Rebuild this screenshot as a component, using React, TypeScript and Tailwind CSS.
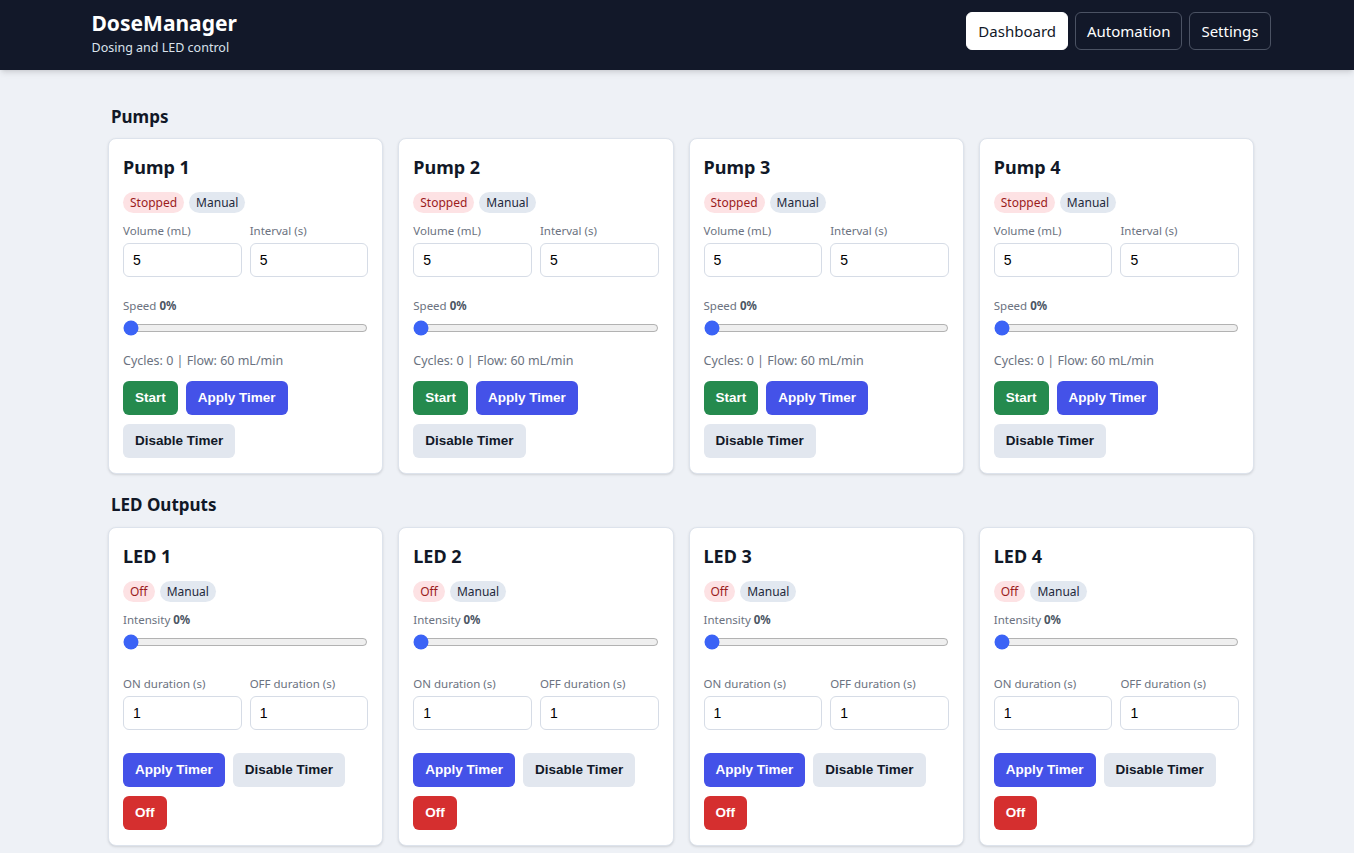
import { useState } from "react";

const pumps = [1, 2, 3, 4];
const leds = [1, 2, 3, 4];

function Badge({ kind, children }: { kind: "red" | "gray"; children: React.ReactNode }) {
  return (
    <span
      className={
        kind === "red"
          ? "inline-block h-[21px] rounded-full bg-[#fde2e4] px-[7px] text-[12px] leading-[21px] text-[#9b1c1c]"
          : "inline-block h-[21px] rounded-full bg-[#e2e8f0] px-[7px] text-[12px] leading-[21px] text-[#1e293b]"
      }
    >
      {children}
    </span>
  );
}

function Field({ label, value }: { label: string; value: string }) {
  return (
    <label className="flex min-w-0 flex-1 flex-col">
      <span className="mb-[4px] text-[11.5px] leading-[16px] text-[#6b7280]">{label}</span>
      <input
        defaultValue={value}
        className="h-[34px] w-full rounded-md border border-[#d6dce6] bg-white px-[9px] font-['Liberation_Sans',sans-serif] text-[14px] text-black outline-none"
      />
    </label>
  );
}

function Slider({ label }: { label: string }) {
  return (
    <div>
      <div className="text-[11.5px] leading-[16px] text-[#6b7280]">
        {label} <b className="font-bold text-[#4b5563]">0%</b>
      </div>
      <input type="range" defaultValue={0} className="mt-[6px] block h-[16px] w-full accent-[#3b63f6]" />
    </div>
  );
}

const btn = "h-[34px] rounded-md px-3 font-['Liberation_Sans',sans-serif] text-[13.5px] font-bold";

function PumpCard({ n }: { n: number }) {
  const [running, setRunning] = useState(false);
  return (
    <div className="rounded-lg border border-[#dde3ec] bg-white px-[14px] pt-[15px] pb-[15px] shadow-sm">
      <h3 className="text-[18px] font-bold leading-[26px] text-[#111827]">Pump {n}</h3>
      <div className="mt-[12px] flex gap-[5px]">
        <Badge kind="red">{running ? "Running" : "Stopped"}</Badge>
        <Badge kind="gray">Manual</Badge>
      </div>
      <div className="mt-[10px] flex gap-2">
        <Field label="Volume (mL)" value="5" />
        <Field label="Interval (s)" value="5" />
      </div>
      <div className="mt-[21px]">
        <Slider label="Speed" />
      </div>
      <div className="mt-[16px] text-[12.5px] leading-[18px] text-[#6b7280]">Cycles: 0 | Flow: 60 mL/min</div>
      <div className="mt-[11px] flex flex-wrap gap-x-2 gap-y-[9px]">
        <button onClick={() => setRunning(!running)} className={`${btn} bg-[#258a4e] text-white`}>
          Start
        </button>
        <button className={`${btn} bg-[#4452e8] text-white`}>Apply Timer</button>
        <button className={`${btn} bg-[#e2e7ef] text-[#111827]`}>Disable Timer</button>
      </div>
    </div>
  );
}

function LedCard({ n }: { n: number }) {
  return (
    <div className="rounded-lg border border-[#dde3ec] bg-white px-[14px] pt-[15px] pb-[15px] shadow-sm">
      <h3 className="text-[18px] font-bold leading-[26px] text-[#111827]">LED {n}</h3>
      <div className="mt-[12px] flex gap-[5px]">
        <Badge kind="red">Off</Badge>
        <Badge kind="gray">Manual</Badge>
      </div>
      <div className="mt-[10px]">
        <Slider label="Intensity" />
      </div>
      <div className="mt-[26px] flex gap-2">
        <Field label="ON duration (s)" value="1" />
        <Field label="OFF duration (s)" value="1" />
      </div>
      <div className="mt-[23px] flex flex-wrap gap-x-2 gap-y-[9px]">
        <button className={`${btn} bg-[#4452e8] text-white`}>Apply Timer</button>
        <button className={`${btn} bg-[#e2e7ef] text-[#111827]`}>Disable Timer</button>
        <button className={`${btn} bg-[#d52f2f] text-white`}>Off</button>
      </div>
    </div>
  );
}

export default function App() {
  const [tab, setTab] = useState("Dashboard");

  return (
    <div className="min-h-screen bg-[#eef1f6] font-['Noto_Sans',sans-serif] text-[#111827]">
      {/* header */}
      <header className="h-[70px] bg-[#121829] pt-[12px] shadow-md">
        <div className="mx-auto flex w-[1187px] items-start justify-between pl-2">
          <div>
            <div className="text-[21px] font-bold leading-[22px] text-white">DoseManager</div>
            <div className="mt-[6px] text-[12.5px] leading-[16px] text-[#dbe2ec]">Dosing and LED control</div>
          </div>
          <nav className="flex gap-[7px]">
            {["Dashboard", "Automation", "Settings"].map((t) => (
              <button
                key={t}
                onClick={() => setTab(t)}
                className={
                  tab === t
                    ? "h-[38px] rounded-md border border-white bg-white px-[11px] text-[15px] text-[#111827]"
                    : "h-[38px] rounded-md border border-[#4b5263] px-[11px] text-[15px] text-white"
                }
              >
                {t}
              </button>
            ))}
          </nav>
        </div>
      </header>

      <main className="mx-auto w-[1154px] pl-2 pt-[34px] pb-6">
        <h2 className="pl-[3px] text-[17px] font-bold leading-[26px]">Pumps</h2>
        <div className="mt-[8px] grid grid-cols-4 gap-[15px]">
          {pumps.map((n) => (
            <PumpCard key={n} n={n} />
          ))}
        </div>

        <h2 className="mt-[18px] pl-[3px] text-[17px] font-bold leading-[26px]">LED Outputs</h2>
        <div className="mt-[9px] grid grid-cols-4 gap-[15px]">
          {leds.map((n) => (
            <LedCard key={n} n={n} />
          ))}
        </div>
      </main>
    </div>
  );
}
